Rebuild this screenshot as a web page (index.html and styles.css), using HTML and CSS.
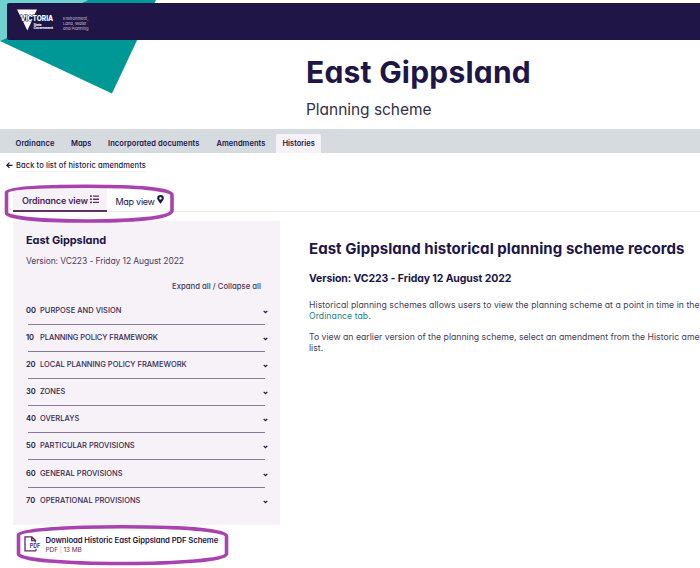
FILE: index.html
```
<!DOCTYPE html>
<html lang="en">
<head>
<meta charset="utf-8">
<title>East Gippsland Planning scheme</title>
<link rel="stylesheet" href="styles.css">
</head>
<body>
<header class="masthead">
  <svg class="backdrop" width="160" height="96" viewBox="0 0 160 96" aria-hidden="true">
    <path fill="#70d1d1" d="M0 0H88L0 41Z"/>
    <path fill="#009797" d="M88 0H156L112 93.5L0 41Z"/>
  </svg>
  <div class="brandbar">
    <svg class="logo" width="38" height="23" viewBox="0 0 38 23" aria-label="Victoria State Government">
      <path fill="#fff" d="M0 .5H20L16.5 8H3.7ZM5.600 11.500H15L10.300 21.500Z"/>
      <text class="logo-name" x="3.600" y="12.300" textLength="32.500" lengthAdjust="spacingAndGlyphs">VICTORIA</text>
      <text class="logo-sub" x="16.500" y="16.600" textLength="8">State</text>
      <text class="logo-sub" x="16.500" y="20" textLength="19.500">Government</text>
    </svg>
    <div class="department">Environment,<br>Land, Water<br>and Planning</div>
  </div>
  <div class="title-block">
    <h1>East Gippsland</h1>
    <p>Planning scheme</p>
  </div>
</header>
<nav class="nav">
  <a class="n-ord">Ordinance</a><a class="n-map">Maps</a><a class="n-inc">Incorporated documents</a><a class="n-ame">Amendments</a><a class="current">Histories</a>
</nav>
<a class="back"><svg width="7" height="7" viewBox="0 0 7 7"><path d="M6.5 3.3H.9M3.4.7L.8 3.3L3.4 5.9" fill="none" stroke="#201547" stroke-width="1.2"/></svg><span>Back to list of historic amendments</span></a>
<div class="tabs">
  <div class="tab active"><span>Ordinance view</span><svg width="9" height="9" viewBox="0 0 9 9" fill="#603060"><path d="M0 .2h1.900v1.700H0zM0 3.400h1.900v1.700H0zM0 6.600h1.900v1.700H0zM3 .400h6v1.300H3zM3 3.600h6v1.300H3zM3 6.800h6v1.300H3z"/></svg></div>
  <div class="tab"><span>Map view</span><svg class="pin" width="7" height="9" viewBox="0 0 7 9"><path fill="#201547" fill-rule="evenodd" d="M3.5 0A3.3 3.3 0 0 0 .2 3.3C.2 5 1.5 6 3.5 8.8C5.500 6 6.800 5 6.800 3.300A3.300 3.300 0 0 0 3.500 0ZM3.500 2A1.250 1.250 0 1 1 3.490 2Z"/></svg></div>
  <svg class="mark" width="176" height="42" viewBox="0 0 176 42"><path d="M6.500 9.500C8 5 40 3.300 87 3.300C136 3.300 172 6 172 12V28C170 35 135 38 88 38C42 38 7 35 6.500 30Z"/></svg>
</div>
<main class="columns">
  <section class="side">
    <div class="panel">
      <h2>East Gippsland</h2>
      <p class="version">Version: VC223 - Friday 12 August 2022</p>
      <p class="expand">Expand all / Collapse all</p>
      <ul>
        <li><b>00</b><span>PURPOSE AND VISION</span><svg class="chev" viewBox="0 0 5 4"><path d="M.7.9L2.500 2.700L4.300.9"/></svg></li>
        <li><b>10</b><span class="tight">PLANNING POLICY FRAMEWORK</span><svg class="chev" viewBox="0 0 5 4"><path d="M.7.9L2.500 2.700L4.300.9"/></svg></li>
        <li><b>20</b><span>LOCAL PLANNING POLICY FRAMEWORK</span><svg class="chev" viewBox="0 0 5 4"><path d="M.7.9L2.500 2.700L4.300.9"/></svg></li>
        <li><b>30</b><span>ZONES</span><svg class="chev" viewBox="0 0 5 4"><path d="M.7.9L2.500 2.700L4.300.9"/></svg></li>
        <li><b>40</b><span>OVERLAYS</span><svg class="chev" viewBox="0 0 5 4"><path d="M.7.9L2.500 2.700L4.300.9"/></svg></li>
        <li><b>50</b><span>PARTICULAR PROVISIONS</span><svg class="chev" viewBox="0 0 5 4"><path d="M.7.9L2.500 2.700L4.300.9"/></svg></li>
        <li><b>60</b><span>GENERAL PROVISIONS</span><svg class="chev" viewBox="0 0 5 4"><path d="M.7.9L2.500 2.700L4.300.9"/></svg></li>
        <li><b>70</b><span>OPERATIONAL PROVISIONS</span><svg class="chev" viewBox="0 0 5 4"><path d="M.7.9L2.500 2.700L4.300.9"/></svg></li>
      </ul>
    </div>
    <div class="download">
      <svg class="file" width="17" height="17" viewBox="0 0 17 17"><path d="M12 14.800H1V.8H7.800L11.300 4.300V7M7.600 1V4.500H11.200M12 12.500V14.800" fill="none" stroke="#5d2d62" stroke-width="1.300"/><text x="5.700" y="11.900" textLength="10.600">PDF</text></svg>
      <div class="dl-text"><strong>Download Historic East Gippsland PDF Scheme</strong><small>PDF <i>|</i> 13 MB</small></div>
      <svg class="mark" width="216" height="44" viewBox="0 0 216 44"><path d="M2.500 11C4 6 50 2.800 106 2.800C164 2.800 210 6 210.500 12V30C209 36 163 39.500 106 39.500C50 39.500 3 36 2.500 30Z"/></svg>
    </div>
  </section>
  <article class="content">
    <h2>East Gippsland historical planning scheme records</h2>
    <h3>Version: VC223 - Friday 12 August 2022</h3>
    <p class="p1">Historical planning schemes allows users to view the planning scheme at a point in time in the<br><a>Ordinance tab.</a></p>
    <p class="p2">To view an earlier version of the planning scheme, select an amendment from the Historic amendments<br>list.</p>
  </article>
</main>
</body>
</html>
```
FILE: styles.css
```
* { box-sizing: border-box; }
body {
  margin: 0; width: 700px; height: 568px; overflow: hidden; background: #fff;
  color: #201547; font-family: Inter, "Open Sans", sans-serif;
  font-feature-settings: "cv11"; white-space: nowrap;
}
h1, h2, h3, p, ul { margin: 0; padding: 0; }
svg { flex: none; display: block; }
.masthead { position: relative; height: 129px; padding: 3px 0 0 7px; }
.backdrop { position: absolute; left: 0; top: 0; }
.brandbar {
  position: relative; height: 37px; background: #201547; border-radius: 2px 0 0 2px;
  display: flex; padding: 6px 0 0 10px;
}
.logo-name { font-size: 7px; font-weight: 800; fill: #fff; stroke: #201547; stroke-width: .9px; paint-order: stroke; }
.logo-sub { font-size: 3.400px; font-weight: 700; fill: #fff; }
.department { margin: 6.500px 0 0 8px; font-size: 4.100px; line-height: 5px; color: #c9c4d6; }
.title-block { padding: 13px 0 0 299px; }
h1 { font-size: 30px; line-height: 38px; font-weight: 700; letter-spacing: .22px; }
.title-block p { font-size: 15.500px; line-height: 20px; margin-top: 9px; letter-spacing: -.04px; color: #333049; }
.nav {
  height: 23.500px; background: #d6dbdf; display: flex; align-items: flex-end;
  padding-left: 8.500px; font-size: 7.500px; font-weight: 600;
}
.nav a { height: 19px; line-height: 19px; padding: 0 7px; }
.nav .n-ord { width: 55.500px; letter-spacing: .12px; }
.nav .n-map { width: 37px; letter-spacing: 0; }
.nav .n-inc { width: 108.500px; letter-spacing: .08px; }
.nav .n-ame { width: 66.500px; letter-spacing: .04px; }
.nav .current { width: 45px; padding-left: 6.500px; background: #f6f2f7; border-radius: 2px 2px 0 0; }
.back { display: flex; align-items: center; gap: 3px; height: 12px; margin: 7.500px 0 0 6px; font-size: 7.500px; font-weight: 500; letter-spacing: .1px; }
.back svg { margin-top: -2px; }
.back span { border-bottom: 1px solid #f4f1f6; line-height: 11px; }
.tabs {
  position: relative; display: flex; height: 24px; margin: 16px 0 0 13px;
  border-bottom: 1px solid #f0eff2; font-size: 9px; font-weight: 400;
}
.tab { height: 24px; padding: 2px 0 0 9px; display: flex; align-items: center; }
.tab.active { width: 93.500px; font-weight: 600; background: #f6f2f7; border-bottom: 2px solid #603060; color: #4c2858; padding-top: 3px; }
.tab.active span { width: 68px; letter-spacing: -.15px; }
.tab.active svg { margin-top: -2px; }
.tab:nth-child(2) span { width: 41px; letter-spacing: -.27px; }
.pin { margin-top: -3px; }
.mark { position: absolute; }
.mark path { fill: none; stroke: #a842ae; stroke-width: 3.600; stroke-linejoin: round; }
.tabs .mark { left: -13px; top: -5px; }
.columns { display: flex; margin-top: 9px; }
.side { width: 267px; margin-left: 13px; flex: none; }
.panel { height: 304px; background: #f6f2f7; padding: 12px 0 0 13px; }
.panel h2 { font-size: 11px; line-height: 14px; letter-spacing: -.1px; }
.version { font-size: 8.500px; line-height: 12px; margin-top: 8px; letter-spacing: -.1px; color: #49405f; }
.expand { font-size: 7.700px; line-height: 12px; margin-top: 14px; padding-right: 19px; text-align: right; font-weight: 500; letter-spacing: .02px; color: #40365b; }
ul { list-style: none; margin-top: 12px; width: 242px; }
li { height: 27.100px; display: flex; font-size: 7.500px; line-height: 12px; }
li b { font-weight: 600; width: 14px; letter-spacing: -.05px; }
li span { font-weight: 500; flex: 1; letter-spacing: .01px; color: #352a52; }
li .tight { letter-spacing: -.08px; }
.chev { width: 5px; height: 4px; margin: 5px 0 0; }
.chev path { fill: none; stroke: #201547; stroke-width: 1.300; }
li:not(:last-child) { background: linear-gradient(#8d7895, #8d7895) 2px 19px / 237px 1px no-repeat; }
.download { position: relative; height: 38px; display: flex; padding: 11px 0 0 11px; }
.file text { font-size: 5.500px; font-weight: 700; fill: #5d2d62; stroke: #fff; stroke-width: 1.200px; paint-order: stroke; }
.dl-text { margin-left: 4.500px; margin-top: -1px; display: flex; flex-direction: column; }
.dl-text strong { font-size: 7.700px; line-height: 11px; font-weight: 600; letter-spacing: -.07px; }
.dl-text small { font-size: 6.500px; line-height: 8px; letter-spacing: -.08px; color: #5d2d62; }
.dl-text i { font-style: normal; color: #b9aabd; }
.download .mark { left: 3px; top: -1px; }
.content { margin-left: 29px; width: 391px; overflow: hidden; padding-top: 18px; }
.content h2 { font-size: 15px; line-height: 20px; letter-spacing: .05px; }
.content h3 { font-size: 10.500px; line-height: 14px; margin-top: 13px; letter-spacing: -.1px; }
.content p { font-size: 8.700px; line-height: 11px; color: #45405a; }
.p1 { margin-top: 14px; letter-spacing: .04px; }
.p1 a { color: #1b8583; }
.p2 { margin-top: 9.500px; letter-spacing: 0; }
```
